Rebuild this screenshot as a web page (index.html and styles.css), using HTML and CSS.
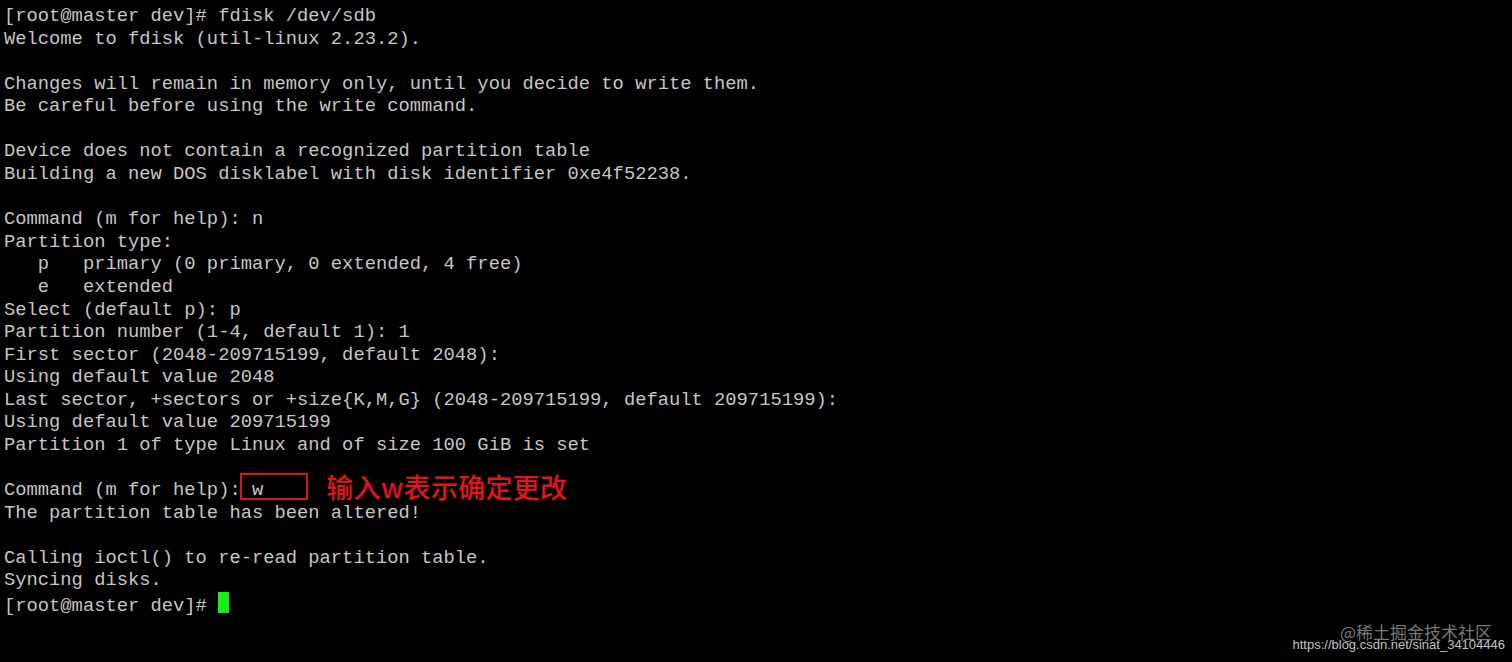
FILE: index.html
```html
<!DOCTYPE html>
<html lang="en">
<head>
<meta charset="utf-8">
<title>fdisk</title>
<link rel="stylesheet" href="styles.css">
</head>
<body>
<main class="term">
<pre class="out">[root@master dev]# fdisk /dev/sdb
Welcome to fdisk (util-linux 2.23.2).

Changes will remain in memory only, until you decide to write them.
Be careful before using the write command.

Device does not contain a recognized partition table
Building a new DOS disklabel with disk identifier 0xe4f52238.

Command (m for help): n
Partition type:
   p   primary (0 primary, 0 extended, 4 free)
   e   extended
Select (default p): p
Partition number (1-4, default 1): 1
First sector (2048-209715199, default 2048):
Using default value 2048
Last sector, +sectors or +size{K,M,G} (2048-209715199, default 209715199):
Using default value 209715199
Partition 1 of type Linux and of size 100 GiB is set

Command (m for help):<span class="mark"> w    </span><span class="note">输入w表示确定更改</span>
The partition table has been altered!

Calling ioctl() to re-read partition table.
Syncing disks.
[root@master dev]# <span class="cursor"> </span></pre>
<div class="wm">
  <span class="wm-a">@稀土掘金技术社区</span>
  <span class="wm-b">https://blog.csdn.net/sinat_34104446</span>
</div>
</main>
</body>
</html>
```
FILE: styles.css
```css
html, body {
  margin: 0;
  padding: 0;
  background: #000;
}
.term {
  position: relative;
  width: 1512px;
  height: 662px;
  overflow: hidden;
  background: #000;
}
.out {
  margin: 0;
  padding: 5px 0 0 4px;
  font-family: "Liberation Mono", monospace;
  font-size: 18.8px;
  line-height: 22.58px;
  color: #c6c6c6;
  white-space: pre;
}
.mark {
  position: relative;
}
.mark::before {
  content: "";
  position: absolute;
  left: -1px;
  top: -6px;
  width: 64px;
  height: 23px;
  border: 2px solid #d8141a;
}
.note {
  position: relative;
  top: 3px;
  margin-left: 18px;
  font-family: "Noto Sans CJK SC", sans-serif;
  font-size: 27px;
  font-weight: 500;
  letter-spacing: 0.3px;
  color: #e3141b;
  line-height: 0;
}
.cursor {
  display: inline-block;
  width: 11px;
  height: 21px;
  vertical-align: 3px;
  background: #16f016;
}
.wm {
  position: absolute;
  right: 7px;
  bottom: 8px;
  width: 220px;
  height: 32px;
}
.wm-a {
  position: absolute;
  right: 13px;
  top: 0;
  font-family: "Noto Sans CJK SC", sans-serif;
  font-size: 17px;
  line-height: 20px;
  color: #7a7a7a;
}
.wm-b {
  position: absolute;
  right: 0;
  top: 15px;
  font-family: "Liberation Sans", sans-serif;
  font-size: 13px;
  line-height: 16px;
  color: #c4c4c4;
}
```
